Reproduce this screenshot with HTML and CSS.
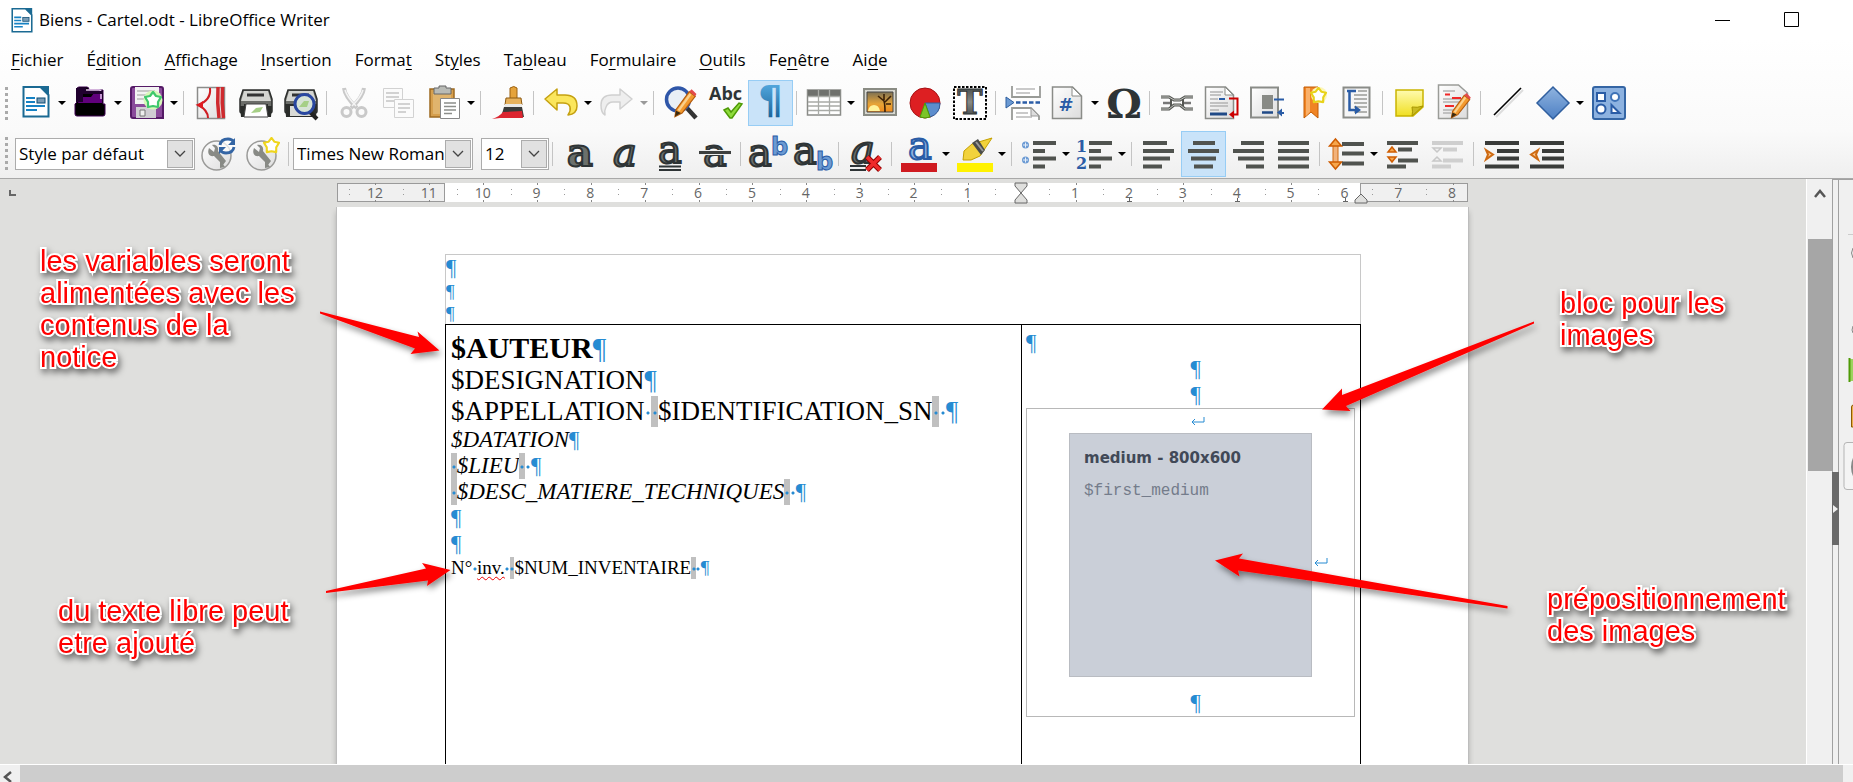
FILE: index.html
```html
<!DOCTYPE html>
<html lang="fr">
<head>
    <meta charset="UTF-8">
    <title>Biens - Cartel.odt - LibreOffice Writer</title>
    <link rel="stylesheet" href="styles.css">
</head>
<body>
    <!-- shared gradients and symbols -->
    <svg class="defs" aria-hidden="true">
        <defs>
            <linearGradient id="gDark" x1="0" y1="0" x2="0" y2="1"><stop offset="0" stop-color="#2e3436"/><stop offset=".5" stop-color="#888a85"/><stop offset="1" stop-color="#2e3436"/></linearGradient>
            <linearGradient id="gBlue" x1="0" y1="0" x2="0" y2="1"><stop offset="0" stop-color="#8fb3df"/><stop offset="1" stop-color="#4d80c4"/></linearGradient>
            <linearGradient id="gPil" x1="0" y1="0" x2="0" y2="1"><stop offset="0" stop-color="#5db4ea"/><stop offset="1" stop-color="#12598f"/></linearGradient>
            <linearGradient id="gPaper" x1="0" y1="0" x2="1" y2="1"><stop offset="0" stop-color="#fff"/><stop offset="1" stop-color="#dcdcdc"/></linearGradient>
            <linearGradient id="gNote" x1="0" y1="0" x2="0" y2="1"><stop offset="0" stop-color="#fffbb0"/><stop offset="1" stop-color="#f0df22"/></linearGradient>
            <linearGradient id="gSun" x1="0" y1="0" x2="0" y2="1"><stop offset="0" stop-color="#7d7153"/><stop offset=".6" stop-color="#e7a437"/><stop offset="1" stop-color="#f08a1c"/></linearGradient>
            <filter id="drop" x="-20%" y="-50%" width="140%" height="220%"><feDropShadow dx="2" dy="4" stdDeviation="3" flood-color="#000" flood-opacity=".45"/></filter>
        </defs>
        <symbol id="doc" viewBox="0 0 28 32">
            <path d="M1.500 1h17l8 8v21.500h-25z" fill="#fff" stroke="#1b6a93" stroke-width="2"/>
            <path d="M18 0l9 9V0z" fill="#1b6a93"/>
            <path d="M4 12h9M4 16h9M4 20h19M4 24h11" stroke="#1682c4" stroke-width="2"/>
            <rect x="15" y="12" width="8" height="5" fill="#7a9cb5" stroke="#0d4d75"/>
        </symbol>
        <symbol id="wrench" viewBox="0 0 34 34">
            <circle cx="15.500" cy="18.500" r="14.500" fill="url(#gPaper)" stroke="#9a9a98" stroke-width="1.500"/>
            <path d="M8 11l5 4 1-4-3-3c4-1 7 2 6 6l8 10-3 4-9-9c-5 1-7-3-5-8z" fill="#888a85"/>
            <path d="M19 23l5 7-5 1z" fill="#888a85"/>
        </symbol>
        <symbol id="pencil" viewBox="0 0 20 26">
            <path d="M2 24l1-6L14 3l5 4L8 21z" fill="#f39a2e" stroke="#b55c0c"/>
            <path d="M14 3l2-2 4 4-1 2z" fill="#e34a4a"/>
            <path d="M2 24l1-5 4 2z" fill="#3a2a10"/>
            <path d="M5 19L15 5" stroke="#fbd08c" stroke-width="2"/>
        </symbol>
        <symbol id="star" viewBox="0 0 18 18">
            <path d="M9 1l3 4 5 1-3 5 0 5-5-1-5 1 0-5-3-5 5-1z" fill="#fff" stroke="currentColor" stroke-width="2.200" stroke-linejoin="round"/>
        </symbol>
    </svg>

    <header class="head">
        <div class="titlebar">
            <svg class="app-icon" viewBox="0 0 28 32"><use href="#doc"/></svg>
            <h1 class="title">Biens - Cartel.odt - LibreOffice Writer</h1>
            <button class="win" aria-label="Réduire"><svg width="16" height="16"><path d="M0 8.500h15" stroke="#000"/></svg></button>
            <button class="win" aria-label="Agrandir"><svg width="16" height="16"><path d="M.5.500h14v14H.5z" fill="none" stroke="#000"/></svg></button>
        </div>

        <nav class="menu">
            <button><u>F</u>ichier</button>
            <button>É<u>d</u>ition</button>
            <button><u>A</u>ffichage</button>
            <button><u>I</u>nsertion</button>
            <button>Forma<u>t</u></button>
            <button>St<u>y</u>les</button>
            <button>Ta<u>b</u>leau</button>
            <button>Fo<u>r</u>mulaire</button>
            <button><u>O</u>utils</button>
            <button>Fe<u>n</u>être</button>
            <button>Ai<u>d</u>e</button>
        </nav>

        <!-- standard toolbar -->
        <div class="bar bar-std">
            <i class="grip"></i>
            <button class="tb" aria-label="Nouveau"><svg viewBox="0 0 34 34"><use href="#doc" x="4" y="0" width="28" height="32"/></svg></button>
            <button class="dd" aria-label="Plus"></button>
            <button class="tb" aria-label="Ouvrir"><svg viewBox="0 0 34 34"><path d="M2 2q0-2 2-2h8q2 0 2 3h14v14h2v10q0 2-2 2H2q-2 0-2-2V17l2-2z" fill="#000" stroke="#3d0050" transform="translate(1 1)"/><path d="M4 17l2-4q1-2 3-2h8l3-4h8v10z" fill="#60007c"/><path d="M8 12V6q0-2 2-2h15q2 0 2 2v7" fill="none" stroke="#e6c6ee" stroke-width="1.500"/><path d="M2 2h10v3h16v3H9v8H2z" fill="#20002e"/></svg></button>
            <button class="dd" aria-label="Plus"></button>
            <button class="tb" aria-label="Enregistrer"><svg viewBox="0 0 34 34"><path d="M1 3q0-2 2-2h28q2 0 2 2v29H3q-2 0-2-2z" fill="#8a4a9b" stroke="#551a66" stroke-width="2"/><path d="M5 1h24v17H5z" fill="#f3f3f3"/><path d="M7 5h18M7 9h9M7 13h9" stroke="#bbb" stroke-width="1.500"/><path d="M6 21h20v11H6z" fill="#d0cdd3"/><path d="M10 24h5v6h-5z" fill="#eee" stroke="#777"/><circle cx="23" cy="14" r="9.500" fill="#d9f7bb"/><use href="#star" x="14" y="5" width="18" height="18" color="#3fc86c"/></svg></button>
            <button class="dd" aria-label="Plus"></button>
            <i class="sep"></i>
            <button class="tb" aria-label="Exporter au format PDF"><svg viewBox="0 0 34 34"><path d="M3.500 1.500h27v31h-27z" fill="url(#gPaper)" stroke="#8c8c8a" stroke-width="1.500"/><path d="M24 1q-1 16 1 31M28.500 1q-1 16 1 31" stroke="#cf2a2e" stroke-width="3.500" fill="none"/><path d="M16 2c1 8-4 14-12 17 6 3 10 7 10 13" fill="none" stroke="#cf1d22" stroke-width="2"/><path d="M3 19l6-4v8z" fill="#e01b20"/></svg></button>
            <button class="tb" aria-label="Imprimer"><svg viewBox="0 0 34 34"><path d="M4 4h26l3 9v12q0 2-2 2H3q-2 0-2-2V13z" fill="#6b6d69" stroke="#2c2e2c" stroke-width="1.500"/><path d="M5 5h24l3 10H2z" fill="#d4d5d1"/><path d="M8 9h17" stroke="#333" stroke-width="3"/><path d="M5 18h24v9H5z" fill="#2b2d2b"/><path d="M1 20h6l-2 11H2zM27 20h6l-1 11h-3z" fill="#2b2d2b"/><path d="M7 18h20l2 13H5z" fill="#fff" stroke="#444"/><path d="M12 27l5-5 7-1-3 5z" fill="#a6cf86"/></svg></button>
            <button class="tb" aria-label="Aperçu"><svg viewBox="0 0 34 34"><path d="M4 4h26l3 9v12q0 2-2 2H3q-2 0-2-2V13z" fill="#6b6d69" stroke="#2c2e2c" stroke-width="1.500"/><path d="M5 5h24l3 10H2z" fill="#d4d5d1"/><path d="M8 9h17" stroke="#333" stroke-width="3"/><path d="M1 18h32l-1 13H2z" fill="#2b2d2b"/><path d="M6 20h22v10H6z" fill="#d9dad6"/><path d="M26 26l7 7" stroke="#222" stroke-width="4"/><circle cx="20.500" cy="18" r="9.500" fill="#d6e2d5" stroke="#2947a0" stroke-width="3"/><path d="M15 21l5-6 5 0-2 6z" fill="#a6cf86"/></svg></button>
            <i class="sep"></i>
            <button class="tb" aria-label="Couper"><svg viewBox="0 0 34 34" fill="none" stroke="#c9c9c9"><path d="M7 2q1 9 13 20M27 2q-1 9-13 20" stroke-width="4"/><path d="M8 4q2 7 11 16M26 4q-2 7-11 16" stroke="#f4f4f4" stroke-width="1.500"/><circle cx="9.500" cy="26" r="4.500" stroke-width="3"/><circle cx="24.500" cy="26" r="4.500" stroke-width="3"/></svg></button>
            <button class="tb" aria-label="Copier"><svg viewBox="0 0 34 34" fill="#fbfbfb" stroke="#d2d2d2"><path d="M1.500 2.500h19v19h-19z"/><path d="M4 7h13M4 11h13M4 15h9" stroke-width="2"/><path d="M12.500 13.500h19v18h-19z"/><path d="M16 18h12M16 22h12M16 26h8" stroke-width="2"/></svg></button>
            <button class="tb" aria-label="Coller"><svg viewBox="0 0 34 34"><path d="M3 3h24v28H3z" fill="#d69f4d" stroke="#9d6a20" stroke-width="1.500"/><path d="M6 6h18v22H6z" fill="#e0b46d"/><path d="M7 2h5V0h7v2h5v6H7z" fill="#b9bbb6" stroke="#666"/><path d="M13.500 12.500h19v20h-19z" fill="#fff" stroke="#888"/><path d="M17 17h12M17 20.500h12M17 24h12M17 27.500h8" stroke="#8c8e8a" stroke-width="1.500"/></svg></button>
            <button class="dd" aria-label="Plus"></button>
            <i class="sep"></i>
            <button class="tb" aria-label="Cloner le formatage"><svg viewBox="0 0 34 34"><path d="M19 2q4-3 7 0v12h-7z" fill="#e5a33b" stroke="#9b6110"/><path d="M15 12h15l1 7H14z" fill="#e7b25d" stroke="#8d5a12"/><path d="M14 18h17v4H13z" fill="#e9e9e7"/><path d="M13 21h18l2 10H10z" fill="#3a3b3a"/><path d="M12 26l19-1 1 7H9l-8 1q7-2 11-7z" fill="#dc2530"/></svg></button>
            <i class="sep"></i>
            <button class="tb" aria-label="Annuler"><svg viewBox="0 0 34 34"><path d="M1 13L13 3v6h8q12 0 12 11 0 8-9 9 3-4 2-8-1-4-7-4h-6v7z" fill="#fbe65c" stroke="#c5a111" stroke-width="1.500" stroke-linejoin="round"/></svg></button>
            <button class="dd" aria-label="Plus"></button>
            <button class="tb" aria-label="Rétablir"><svg viewBox="0 0 34 34"><path d="M32 13L20 3v6h-8Q1 9 1 19q0 8 4 10-1-4 1-8 2-5 7-5h7v7z" fill="#eee" stroke="#d0d0d0" stroke-width="1.500" stroke-linejoin="round"/></svg></button>
            <button class="dd off" aria-label="Plus"></button>
            <i class="sep"></i>
            <button class="tb" aria-label="Rechercher"><svg viewBox="0 0 34 34"><path d="M22 21l10 11" stroke="#333" stroke-width="4.500"/><circle cx="14" cy="13.500" r="11.500" fill="#e9eff6" stroke="#2f56a8" stroke-width="3.500"/><use href="#pencil" x="7" y="2" width="27" height="31"/></svg></button>
            <button class="tb" aria-label="Orthographe"><svg viewBox="0 0 34 34"><text x="0" y="14" class="t-abc">Abc</text><path d="M15 24l4-2 3 4 8-9 3 1-10 14h-2z" fill="#8edb3c" stroke="#4e9a06" stroke-width="1.500"/></svg></button>
            <button class="tb on" aria-label="Marques de formatage"><svg viewBox="0 0 34 34"><text x="4" y="28" class="t-pil" fill="url(#gPil)">¶</text></svg></button>
            <i class="sep"></i>
            <button class="tb" aria-label="Tableau"><svg viewBox="0 0 34 34"><path d="M.5 4h33v25H.5z" fill="#fff" stroke="#8a8c88" stroke-width="1.500"/><path d="M1 4h32v6H1z" fill="#6f716d"/><path d="M11.500 4v25M22.500 4v25M1 10.500h32M1 16h32M1 20h32M1 24.500h32" stroke="#a9aba7" stroke-width="1.300"/></svg></button>
            <button class="dd" aria-label="Plus"></button>
            <button class="tb" aria-label="Image"><svg viewBox="0 0 34 34"><path d="M0 2h34v28H0z" fill="#8a8c84"/><path d="M2 4h30v24H2z" fill="#d8d8d0"/><path d="M4 6h26v20H4z" fill="url(#gSun)" stroke="#444"/><path d="M5 25q1-6 6-6t6 6z" fill="#fff29a"/><path d="M22 26q0-8-1-11l-6-5M22 16l6-6M21 14V8M23 18h5" stroke="#3b2108" stroke-width="1.600" fill="none"/></svg></button>
            <button class="tb" aria-label="Diagramme"><svg viewBox="0 0 34 34"><circle cx="17" cy="17" r="15" fill="#dd1f22" stroke="#a61114"/><path d="M17 17h15q0 11-10 14z" fill="#5c8dcd" stroke="#2f5f9f"/><path d="M17 17l5 14q-5 2-10 0z" fill="#7cc427" stroke="#4e9a06"/></svg></button>
            <button class="tb" aria-label="Zone de texte"><svg viewBox="0 0 34 34"><path d="M1 1h32v32H1z" fill="#fff" stroke="#000" stroke-width="2" stroke-dasharray="2.500 1.500"/><text x="17" y="28" text-anchor="middle" class="t-t" fill="url(#gDark)">T</text></svg></button>
            <i class="sep"></i>
            <button class="tb" aria-label="Saut de page"><svg viewBox="0 0 34 34"><path d="M6 0v11h28V0M6 34V22h19l8 8v4" fill="#fff" stroke="#999b97" stroke-width="1.800"/><path d="M10 3h19M10 7h14M10 27h12M10 31h16" stroke="#b9b9b9" stroke-width="1.500"/><path d="M25 22v8h8z" fill="#ddd" stroke="#999"/><path d="M0 11l8 5.500L0 22z" fill="#6b9ad3" stroke="#2f5f9f"/><path d="M10 16.500h24" stroke="#2a5ca6" stroke-width="2.500" stroke-dasharray="4.500 2"/></svg></button>
            <button class="tb" aria-label="Champ"><svg viewBox="0 0 34 34"><path d="M1.500 1h20l9 9v22.500h-29z" fill="url(#gPaper)" stroke="#8a8c88" stroke-width="1.500"/><path d="M21 1v9h9z" fill="#fff" stroke="#8a8c88"/><text x="15" y="25" text-anchor="middle" class="t-hash">#</text></svg></button>
            <button class="dd" aria-label="Plus"></button>
            <button class="tb" aria-label="Caractère spécial"><svg viewBox="0 0 34 34"><text x="17" y="32" text-anchor="middle" class="t-omega">Ω</text></svg></button>
            <i class="sep"></i>
            <button class="tb" aria-label="Hyperlien"><svg viewBox="0 0 34 34" fill="none"><path d="M1 11h8l5 3h6l5-3h8M1 23h8l5-4h6l5 4h8" stroke="#555753" stroke-width="3"/><path d="M1 11h8l5 3h6l5-3h8M1 23h8l5-4h6l5 4h8" stroke="#c4c6c2" stroke-width="1"/><path d="M3 17h7M24 17h7" stroke="#777" stroke-width="2.500"/><path d="M11 13v7M23 13v7" stroke="#555753" stroke-width="2"/></svg></button>
            <button class="tb" aria-label="Note de bas de page"><svg viewBox="0 0 34 34"><path d="M.5 1h20l8 8v23.500H.5z" fill="url(#gPaper)" stroke="#8a8c88" stroke-width="1.500"/><path d="M20 1v8h8z" fill="#fff" stroke="#8a8c88"/><path d="M5 6h13M5 9h11M5 13h8M5 17h18M5 20h18M5 24h9" stroke="#b3b3b3" stroke-width="1.500"/><path d="M14 13h6" stroke="#2a5ca6" stroke-width="2"/><path d="M5 28h17" stroke="#204a87" stroke-width="3"/><path d="M24 12.500h8.500v16H26" fill="none" stroke="#cc0000" stroke-width="2"/><path d="M24 28.500l5-4v8z" fill="#cc0000"/></svg></button>
            <button class="tb" aria-label="Note de fin"><svg viewBox="0 0 34 34"><path d="M1 1.500h27v30H1z" fill="url(#gPaper)" stroke="#8a8c88" stroke-width="2"/><path d="M12 9h11v14H12z" fill="#888a85"/><path d="M12 26.500h11" stroke="#204a87" stroke-width="2.500"/><path d="M24 13.500h10M30 27h4" stroke="#2a5ca6" stroke-width="2"/><path d="M27 26.500l5-4v8z" fill="#2a5ca6"/></svg></button>
            <button class="tb" aria-label="Repère de texte"><svg viewBox="0 0 34 34"><path d="M9 1h14v31l-7-6-7 6z" fill="#f08424" stroke="#c45c04"/><path d="M11 2h4v24l-4 4z" fill="#f9b06a"/><circle cx="24" cy="9" r="8" fill="#fcf6b8"/><use href="#star" x="15" y="1" width="17" height="17" color="#e8d21a"/></svg></button>
            <button class="tb" aria-label="Renvoi"><svg viewBox="0 0 34 34"><path d="M3.500 1.500h26v30h-26z" fill="#f6f6f6" stroke="#8a8c88" stroke-width="2"/><path d="M18 5h9M14 9h13M14 13h13M14 17h13M14 21h13M14 26h13" stroke="#9a9c98" stroke-width="1.500"/><path d="M7 5h9M9.500 5v19H15" fill="none" stroke="#2a5ca6" stroke-width="2.500"/><path d="M15 19.500l6 4.500-6 4.500z" fill="#2a5ca6"/></svg></button>
            <i class="sep"></i>
            <button class="tb" aria-label="Commentaire"><svg viewBox="0 0 34 34"><path d="M3 4h27v17l-10 9H3z" fill="url(#gNote)" stroke="#c9b400" stroke-width="1.500"/><path d="M19 30q1-4 0-9 5 1 11-1z" fill="#c9bb22" stroke="#a89600"/></svg></button>
            <button class="tb" aria-label="Suivi des modifications"><svg viewBox="0 0 34 34"><path d="M.5-1h20l9 8v25.500H.5z" fill="url(#gPaper)" stroke="#9a9c98" stroke-width="1.500"/><path d="M5 5h12M5 13h20M5 16h18M5 24h12M5 27h8" stroke="#b3b3b3" stroke-width="1.500"/><path d="M7 8.500h5M14 12h9M7 20h9" stroke="#ef2929" stroke-width="2.200"/><use href="#pencil" x="9" y="6" width="26" height="28"/></svg></button>
            <i class="sep"></i>
            <button class="tb" aria-label="Ligne"><svg viewBox="0 0 34 34"><path d="M5 31L32 4" stroke="#ddd" stroke-width="2"/><path d="M3 29L30 2" stroke="#000" stroke-width="1.600"/></svg></button>
            <button class="tb" aria-label="Losange"><svg viewBox="0 0 34 34"><path d="M17 1l16 16-16 16L1 17z" fill="url(#gBlue)" stroke="#305f9f" stroke-width="1.500"/></svg></button>
            <button class="dd" aria-label="Plus"></button>
            <button class="tb" aria-label="Fonctions de dessin"><svg viewBox="0 0 34 34"><rect x="1" y="1" width="32" height="32" rx="2" fill="#8db2e0" stroke="#3465a4" stroke-width="2"/><path d="M5 7h8v8H5z" fill="#fff" stroke="#2a5ca6" stroke-width="2"/><circle cx="23" cy="11" r="4" fill="#fff" stroke="#3f73b7" stroke-width="2"/><circle cx="9" cy="23" r="4.500" fill="#fff" stroke="#2a5ca6" stroke-width="2"/><path d="M19.500 19v8h8z" fill="#fff" stroke="#2a5ca6" stroke-width="2"/></svg></button>
        </div>

        <!-- formatting toolbar -->
        <div class="bar bar-fmt">
            <i class="grip"></i>
            <label class="combo">
                <select aria-label="Style de paragraphe"><option>Style par défaut</option></select>
                <span class="chev"><svg width="12" height="8"><path d="M1 1l5 5 5-5" fill="none" stroke="#444" stroke-width="1.300"/></svg></span>
            </label>
            <button class="tb" aria-label="Actualiser le style"><svg viewBox="0 0 34 34"><use href="#wrench" width="34" height="34"/><circle cx="26" cy="9" r="8" fill="#fff" opacity=".7"/><path d="M19 8q1-6 8-6 4 0 6 3M33 10q-1 6-8 6-4 0-6-3" fill="none" stroke="#3465a4" stroke-width="2.800"/><path d="M34 1v7h-7zM18 17v-7h7z" fill="#3465a4"/></svg></button>
            <button class="tb" aria-label="Nouveau style"><svg viewBox="0 0 34 34"><use href="#wrench" width="34" height="34"/><use href="#star" x="17" y="0" width="17" height="17" color="#efd51c"/></svg></button>
            <i class="sep"></i>
            <label class="combo">
                <select aria-label="Nom de police"><option>Times New Roman</option></select>
                <span class="chev"><svg width="12" height="8"><path d="M1 1l5 5 5-5" fill="none" stroke="#444" stroke-width="1.300"/></svg></span>
            </label>
            <label class="combo size">
                <select aria-label="Taille de police"><option>12</option></select>
                <span class="chev"><svg width="12" height="8"><path d="M1 1l5 5 5-5" fill="none" stroke="#444" stroke-width="1.300"/></svg></span>
            </label>
            <i class="sep"></i>
            <button class="tb" aria-label="Gras"><svg viewBox="0 0 34 34"><text x="17" y="29" text-anchor="middle" class="t-a wide">a</text></svg></button>
            <button class="tb" aria-label="Italique"><svg viewBox="0 0 34 34"><text x="17" y="29" text-anchor="middle" class="t-a it">a</text></svg></button>
            <button class="tb" aria-label="Souligné"><svg viewBox="0 0 34 34"><text x="17" y="26" text-anchor="middle" class="t-a">a</text><path d="M6 29.500h22M6 33h22" stroke="#2e3436" stroke-width="2"/></svg></button>
            <button class="tb" aria-label="Barré"><svg viewBox="0 0 34 34"><text x="17" y="29" text-anchor="middle" class="t-a">a</text><path d="M1 15.500h32" stroke="#eee" stroke-width="5"/><path d="M1 15.500h32" stroke="#3c3f3e" stroke-width="3"/></svg></button>
            <i class="sep"></i>
            <button class="tb" aria-label="Exposant"><svg viewBox="0 0 34 34"><text x="-3" y="29" class="t-a">a</text><text x="20" y="18" class="t-b">b</text></svg></button>
            <button class="tb" aria-label="Indice"><svg viewBox="0 0 34 34"><text x="-3" y="27" class="t-a">a</text><text x="20" y="33" class="t-b">b</text></svg></button>
            <i class="sep"></i>
            <button class="tb" aria-label="Effacer le formatage"><svg viewBox="0 0 34 34"><text x="14" y="26" text-anchor="middle" class="t-a it">a</text><path d="M1 29h16M1 33h16" stroke="#2e3436" stroke-width="2"/><path d="M18 20l13 13M31 20L18 33" stroke="#8f0000" stroke-width="5.500"/><path d="M18 20l13 13M31 20L18 33" stroke="#ef2929" stroke-width="3.500"/></svg></button>
            <i class="sep"></i>
            <button class="tb" aria-label="Couleur de police"><svg viewBox="0 0 34 34"><text x="18" y="22" text-anchor="middle" class="t-a blue">a</text><path d="M-1 26h36v9H-1z" fill="#cf1a20"/></svg></button>
            <button class="dd" aria-label="Plus"></button>
            <button class="tb" aria-label="Surlignage"><svg viewBox="0 0 34 34"><path d="M5 23l1-9 8-7L34 1 22 19l-9 4z" fill="#f2d23c" stroke="#c4a000"/><path d="M14 6l9 12 4-5-7-11z" fill="#4a4c4a"/><path d="M18 5l7 9" stroke="#999" stroke-width="2"/><path d="M-1 26h36v9H-1z" fill="#fff200"/></svg></button>
            <button class="dd" aria-label="Plus"></button>
            <i class="sep"></i>
            <button class="tb" aria-label="Puces"><svg viewBox="0 0 34 34"><circle cx="3.500" cy="8" r="3.500" fill="#6b9ad3"/><circle cx="3.500" cy="23" r="3.500" fill="#6b9ad3"/><path d="M1 8h5M3.500 5.500v5M1 23h5M3.500 20.500v5" stroke="#e6effa"/><path d="M11 6h23M11 14h12M11 21.500h23M11 29.500h12" class="ln"/></svg></button>
            <button class="dd" aria-label="Plus"></button>
            <button class="tb" aria-label="Numérotation"><svg viewBox="0 0 34 34"><text x="-2" y="15" class="t-num">1</text><text x="-2" y="32" class="t-num">2</text><path d="M11 6h23M11 14h12M11 21.500h23M11 29.500h12" class="ln"/></svg></button>
            <button class="dd" aria-label="Plus"></button>
            <i class="sep"></i>
            <button class="tb" aria-label="Aligner à gauche"><svg viewBox="0 0 34 34"><path d="M1 6h24M1 14h31M1 21.500h27M1 29.500h19" class="ln"/></svg></button>
            <button class="tb on" aria-label="Centrer"><svg viewBox="0 0 34 34"><path d="M6 6h22M1 14h31M4 21.500h25M7 29.500h19" class="ln"/></svg></button>
            <button class="tb" aria-label="Aligner à droite"><svg viewBox="0 0 34 34"><path d="M9 6h23M1 14h31M6 21.500h26M14 29.500h18" class="ln"/></svg></button>
            <button class="tb" aria-label="Justifier"><svg viewBox="0 0 34 34"><path d="M1 6h31M1 14h31M1 21.500h31M1 29.500h31" class="ln"/></svg></button>
            <i class="sep"></i>
            <button class="tb" aria-label="Interligne"><svg viewBox="0 0 34 34"><path d="M3 7h5v21H3z" fill="#f2b27a" stroke="#ce6a12"/><path d="M5.500 2l6 7h-12zM5.500 32l6-7h-12z" fill="#f6a64c" stroke="#ce5c00" stroke-width="1.500"/><path d="M12 7h22M12 16.500h22M12 26.500h22" class="ln"/></svg></button>
            <button class="dd" aria-label="Plus"></button>
            <button class="tb" aria-label="Augmenter l'espacement"><svg viewBox="0 0 34 34"><path d="M1 6h31M12 12.500h14M12 23.500h20M1 29.500h19" class="ln"/><path d="M6 10l4 5H2zM6 25l4-5H2z" fill="#f6a64c" stroke="#ce5c00" stroke-width="1.500"/></svg></button>
            <button class="tb" aria-label="Diminuer l'espacement"><svg viewBox="0 0 34 34"><path d="M1 6h31M12 12.500h14M12 23.500h20M1 29.500h19" class="ln off"/><path d="M6 15l4-4H2zM6 20l4 4H2z" fill="#f0f0f0" stroke="#c8c8c8" stroke-width="1.500"/></svg></button>
            <i class="sep"></i>
            <button class="tb" aria-label="Augmenter le retrait"><svg viewBox="0 0 34 34"><path d="M1 6h34M13 14h22M13 21.500h22M1 29.500h34" class="ln sq"/><path d="M2 13l7 4.500-7 5 2-5z" fill="#fcc58a" stroke="#ce6a12" stroke-width="2"/></svg></button>
            <button class="tb" aria-label="Diminuer le retrait"><svg viewBox="0 0 34 34"><path d="M1 6h34M13 14h22M13 21.500h22M1 29.500h34" class="ln sq"/><path d="M9 13l-7 4.500 7 5-2-5z" fill="#fcc58a" stroke="#ce6a12" stroke-width="2"/></svg></button>
        </div>
    </header>

    <main class="work">
        <div class="canvas">
            <svg class="corner" width="8" height="8"><path d="M1 0v5h6" fill="none" stroke="#666" stroke-width="2"/></svg>

            <div class="sheet">
                <div class="ruler">
                    <div class="out"></div>
                    <div class="in"></div>
                    <div class="out"></div>
                    <ol class="ticks">
                        <li>12</li><li>11</li><li>10</li><li>9</li><li>8</li><li>7</li><li>6</li>
                        <li>5</li><li>4</li><li>3</li><li>2</li><li>1</li><li class="zero"></li>
                        <li>1</li><li class="tab">2</li><li>3</li><li class="tab">4</li><li>5</li>
                        <li class="tab">6</li><li>7</li><li>8</li>
                    </ol>
                    <svg class="mk mk-l" width="14" height="22"><path d="M1 1h12v3L7 11 1 4zM1 21h12v-3L7 11l-6 7z" fill="#dfdfdd" stroke="#666"/></svg>
                    <svg class="mk mk-r" width="14" height="22"><path d="M1 21h12v-3L7 12l-6 6z" fill="#dfdfdd" stroke="#666"/></svg>
                </div>

                <div class="page">
                    <div class="top">
                        <p class="p23"><b class="pm">¶</b></p>
                        <p class="p19"><b class="pm">¶</b></p>
                        <p class="p19"><b class="pm">¶</b></p>
                    </div>
                    <div class="cells">
                        <div class="cell text">
                            <p class="p30">$AUTEUR<b class="pm">¶</b></p>
                            <p class="p27">$DESIGNATION<b class="pm">¶</b></p>
                            <p class="p27">$APPELLATION<b class="sp"> </b><b class="sp f"> </b>$IDENTIFICATION_SN<b class="sp f"> </b><b class="sp"> </b><b class="pm">¶</b></p>
                            <p class="p23"><em>$DATATION</em><b class="pm">¶</b></p>
                            <p class="p23"><b class="sp f"> </b><em>$LIEU</em><b class="sp f"> </b><b class="sp"> </b><b class="pm">¶</b></p>
                            <p class="p23"><b class="sp f"> </b><em>$DESC_MATIERE_TECHNIQUES</em><b class="sp f"> </b><b class="sp"> </b><b class="pm">¶</b></p>
                            <p class="p23"><b class="pm">¶</b></p>
                            <p class="p23"><b class="pm">¶</b></p>
                            <p class="p19">N°<b class="sp"> </b><span class="typo">inv.</span><b class="sp"> </b><b class="sp f"> </b>$NUM_INVENTAIRE<b class="sp f"> </b><b class="sp"> </b><b class="pm">¶</b></p>
                        </div>
                        <div class="cell media">
                            <p class="p23"><b class="pm">¶</b></p>
                            <p class="p23 mid"><b class="pm">¶</b></p>
                            <p class="p23 mid"><b class="pm">¶</b></p>
                            <div class="frame">
                                <p class="p23 mid"><svg width="14" height="10"><path d="M1 6h12V1M4 3L1 6l3 3" fill="none" stroke="#268bd2"/></svg></p>
                                <div class="pic-row">
                                    <div class="pic">
                                        <strong>medium - 800x600</strong>
                                        <code>$first_medium</code>
                                    </div>
                                    <svg class="br" width="14" height="10"><path d="M1 6h12V1M4 3L1 6l3 3" fill="none" stroke="#268bd2"/></svg>
                                </div>
                                <p class="p23 mid last"><b class="pm">¶</b></p>
                            </div>
                        </div>
                    </div>
                </div>

                <!-- callouts drawn over the document -->
                <svg class="arrows" width="1131" height="585" viewBox="337 179 1131 585">
                    <g fill="#f00" filter="url(#drop)">
                        <path d="M320 311.500l99 25.500-1.500-5.500L439.500 350.500 410.500 354l4.500-5.500-95-35z"/>
                        <path d="M326 591l100-22.500-4-5.500 28.500 7-23.500 16 1-5.500L326 593z"/>
                        <path d="M1534 321.500L1342 395v-6.500l-20 21 28.500 1.500-4.500-5 188-82.500z"/>
                        <path d="M1507.500 606L1239 558.500l4-5-28 7 24.500 16-1.500-6 269.500 38z"/>
                    </g>
                </svg>
                <p class="note n-vars">les variables seront<br>alimentées avec les<br>contenus de la<br>notice</p>
                <p class="note n-text">du texte libre peut<br>etre ajouté</p>
                <p class="note n-bloc">bloc pour les<br>images</p>
                <p class="note n-pos">prépositionnement<br>des images</p>
            </div>
        </div>

        <div class="vscroll">
            <button aria-label="Haut"><svg width="12" height="10"><path d="M1 9l5-6 5 6" fill="none" stroke="#555" stroke-width="2.500"/></svg></button>
            <div class="thumb"></div>
        </div>
        <div class="split">
            <button aria-label="Volet latéral"><svg width="7" height="8"><path d="M1 0l5 4-5 4z" fill="#f0f0f0"/></svg></button>
        </div>
        <aside class="side">
            <svg width="13" height="320">
                <path d="M8 54.500h5" stroke="#ccc"/>
                <path d="M13 68q-3 5 0 10M13 146l-1 4 1 3" fill="none" stroke="#888"/>
                <path d="M9 179h4v22H9z" fill="#9bd35e"/><path d="M9.500 178v24" stroke="#4e9a06" stroke-width="2"/>
                <path d="M11.500 227q0-2 2-2v22h-2z" fill="#e9b04a" stroke="#8f5902"/>
                <path d="M14 262.500H7q-3 0-3 3v41q0 3 3 3h7" fill="#f4f4f4" stroke="#b4b4b4"/>
                <path d="M14 278q-4 9 0 18" fill="none" stroke="#888" stroke-width="2"/>
            </svg>
        </aside>
    </main>

    <div class="hscroll">
        <button aria-label="Gauche"><svg width="10" height="12"><path d="M9 1L3 6l6 5" fill="none" stroke="#555" stroke-width="2.500"/></svg></button>
        <div class="thumb"></div>
    </div>
</body>
</html>
```
FILE: styles.css
```css
* {
    box-sizing: border-box;
}
body {
    margin: 0;
    height: 100vh;
    display: flex;
    flex-direction: column;
    overflow: hidden;
    background: #f0f0f0;
    font-family: "Open Sans", "Noto Sans", sans-serif;
    font-size: 17px;
    color: #000;
}
p, h1, ol {
    margin: 0;
    padding: 0;
}
button {
    border: 0;
    padding: 0;
    background: none;
    font: inherit;
    color: inherit;
}
svg {
    display: block;
    flex: none;
}
.defs {
    position: absolute;
    width: 0;
    height: 0;
}

/* window head */
.head {
    flex: none;
    border-bottom: 1px solid #a8a8a8;
    background: linear-gradient(#fff 40px, #fafafa 130px, #efefef);
}
.titlebar {
    display: flex;
    align-items: center;
    height: 40px;
    padding-left: 11px;
}
.app-icon {
    width: 22px;
    height: 25px;
}
.title {
    flex: 1;
    margin-left: 6px;
    font-size: 17px;
    font-weight: 400;
    line-height: 40px;
}
.win {
    display: flex;
    align-items: center;
    justify-content: center;
    width: 69px;
    height: 40px;
}
.win:last-child {
    margin-right: 27px;
}

.menu {
    display: flex;
    gap: 23px;
    height: 40px;
    padding-left: 11px;
}
.menu button {
    line-height: 40px;
}
.menu u {
    text-underline-offset: 3px;
}

/* toolbars */
.bar {
    display: flex;
    align-items: center;
    height: 46px;
}
.bar-fmt {
    height: 48px;
    margin-top: 4px;
    padding-bottom: 1px;
}
.grip {
    flex: none;
    width: 3px;
    height: 33px;
    margin: 0 4px 0 5px;
    background: repeating-linear-gradient(#aaa 0 3px, transparent 3px 6px);
}
.bar-fmt .grip {
    margin-right: 7px;
}
.tb {
    flex: none;
    height: 46px;
    width: 45px;
    padding: 6px 5px 6px 6px;
}
.tb svg {
    width: 34px;
    height: 34px;
    overflow: visible;
}
.tb.on {
    background: #c9e3f9;
    box-shadow: inset 0 0 0 1px #97cdf5;
}
.dd {
    flex: none;
    width: 11px;
    height: 46px;
}
.dd::before {
    content: "";
    display: block;
    margin: 0 3px 0 1px;
    border: 4px solid transparent;
    border-top-color: #000;
    border-bottom: 0;
}
.dd.off::before {
    border-top-color: #999;
}
.sep {
    flex: none;
    width: 1px;
    height: 24px;
    margin: 0 4px 0 3px;
    background: #c4c4c4;
}
.combo {
    position: relative;
    flex: none;
    width: 180px;
    height: 32px;
}
.combo select {
    appearance: none;
    width: 100%;
    height: 100%;
    padding: 0 28px 0 3px;
    border: 1px solid #acacac;
    border-radius: 0;
    background: #fff;
    font: inherit;
    color: #000;
}
.size {
    width: 68px;
    margin-left: 8px;
}
/* drop arrow over the right end of the select */
.chev {
    position: absolute;
    top: 2px;
    right: 2px;
    display: flex;
    align-items: center;
    justify-content: center;
    width: 26px;
    height: 28px;
    border: 1px solid #acacac;
    background: #e1e1e1;
    pointer-events: none;
}

/* letters and lines inside the icons */
.t-abc {
    font: bold 18px "Open Sans", sans-serif;
    fill: #2e3436;
}
.t-pil {
    font: bold 39px "DejaVu Sans", sans-serif;
}
.t-t {
    font: bold 34px "DejaVu Serif", serif;
    stroke: #2e3436;
}
.t-a {
    font: 40px "DejaVu Serif", serif;
    fill: #6b706c;
    stroke: #2e3436;
    stroke-width: 2px;
}
.t-a.it {
    font-style: italic;
}
.t-a.wide {
    font-weight: bold;
}
.t-a.blue {
    fill: #8fb3df;
    stroke: #2a5ca6;
}
.t-b {
    font: bold 24px "DejaVu Sans", sans-serif;
    fill: #6b9ad3;
    stroke: #2a5ca6;
}
.t-hash {
    font: bold 18px "DejaVu Sans", sans-serif;
    fill: #2a5ca6;
}
.t-omega {
    font: bold 40px "DejaVu Serif", serif;
    fill: #2e3436;
}
.t-num {
    font: bold 16px "DejaVu Serif", serif;
    fill: #2a5ca6;
}
.ln {
    fill: none;
    stroke: #50534f;
    stroke-width: 4px;
}
.ln.off {
    stroke: #cfcfcf;
}
.ln.sq {
    stroke: #3a3c3a;
}

/* work area */
.work {
    flex: 1;
    min-height: 0;
    display: flex;
}
.canvas {
    position: relative;
    flex: 1;
    min-width: 0;
    display: flex;
    justify-content: center;
    padding-right: 1px;
    overflow: hidden;
    background: #dfdfdd;
}
.corner {
    position: absolute;
    left: 9px;
    top: 11px;
}
.sheet {
    position: relative;
    flex: none;
    display: flex;
    flex-direction: column;
    width: 1131px;
    padding-top: 4px;
}

/* ruler */
.ruler {
    position: relative;
    display: flex;
    height: 19px;
    margin-bottom: 5px;
}
.ruler .out {
    flex: none;
    width: 108px;
    border: 1px solid #9a9a9a;
    background: #f0f0f0;
}
.ruler .in {
    flex: 1;
    background: #fff;
}
.ticks {
    position: absolute;
    inset: 0;
    padding-left: 12px;
    margin-right: -12px;
    display: flex;
    clip-path: inset(0 12px 0 0);
    list-style: none;
    font-size: 14px;
    line-height: 19px;
    text-align: center;
    color: #666;
}
.ticks li {
    position: relative;
    flex: 1;
    padding-right: 2px;
    background:
        linear-gradient(#888, #888) center top / 1px 2px no-repeat,
        linear-gradient(#888, #888) center bottom / 1px 2px no-repeat,
        linear-gradient(#999, #999) 0 6px / 1px 1px no-repeat,
        linear-gradient(#999, #999) 0 11px / 1px 1px no-repeat;
}
.ticks .tab {
    background:
        linear-gradient(#666, #666) center bottom / 5px 1px no-repeat,
        linear-gradient(#666, #666) center bottom / 1px 4px no-repeat,
        linear-gradient(#999, #999) 0 6px / 1px 1px no-repeat,
        linear-gradient(#999, #999) 0 11px / 1px 1px no-repeat;
}
.mk {
    position: absolute;
    top: -1px;
}
.mk-l {
    left: 677px;
}
.mk-r {
    right: 100px;
}

/* page */
.page {
    flex: 1;
    display: flex;
    flex-direction: column;
    padding: 47px 107px 0 108px;
    background: #fff;
    box-shadow: 0 0 0 1px #bdbdbd, 0 5px 6px rgba(0, 0, 0, .3);
    clip-path: inset(0 -6px);
    font-family: "Liberation Serif", serif;
}
.top {
    height: 70px;
    overflow: hidden;
    border: 1px solid #c8c8c8;
    border-bottom: 0;
}
.cells {
    flex: 1;
    display: flex;
    border: 1px solid #000;
    border-bottom: 0;
}
.cell.text {
    flex: none;
    width: 575px;
    padding: 6px 0 0 5px;
}
.cell.media {
    flex: 1;
    padding: 5px 5px 0 4px;
    border-left: 1px solid #000;
}
.page p {
    white-space: pre;
}
.p19 {
    font-size: 19px;
    line-height: 22px;
}
.p23 {
    font-size: 23px;
    line-height: 26px;
    height: 26px;
}
.p27 {
    font-size: 27px;
    line-height: 31px;
}
.p30 {
    font-size: 30px;
    font-weight: bold;
    line-height: 34px;
}
.mid {
    display: flex;
    padding-left: 50%;
    align-items: center;
}
/* non printing marks */
.pm {
    font-weight: normal;
    color: #268bd2;
}
.sp {
    display: inline-block;
    font-weight: normal;
    background: radial-gradient(#268bd2 1px, transparent 2px) center 55% / 4px 4px no-repeat;
}
.sp.f {
    background-color: #c0c0c0;
}
.typo {
    text-decoration: underline wavy #e00 1px;
    text-underline-offset: 2px;
}
.frame {
    display: flex;
    flex-direction: column;
    height: 309px;
    overflow: hidden;
    border: 1px solid #b8b8b8;
}
.pic-row {
    display: flex;
    align-items: center;
    gap: 2px;
    padding-left: 42px;
}
.pic-row .br {
    margin-top: 14px;
}
.pic {
    display: flex;
    flex-direction: column;
    gap: 13px;
    width: 243px;
    height: 244px;
    padding: 14px;
    border: 1px solid #b9bcc2;
    background: #cacfd8;
}
.pic strong {
    font: bold 15px/20px "DejaVu Sans", sans-serif;
    color: #414957;
    white-space: nowrap;
}
.pic code {
    font: 16px/20px "Liberation Mono", monospace;
    color: #747c8b;
}
.last {
    margin-top: 13px;
}

/* callouts */
.arrows {
    position: absolute;
    left: 0;
    top: 0;
    overflow: visible;
    pointer-events: none;
}
.note {
    position: absolute;
    font: 29px/32px "Liberation Sans", sans-serif;
    white-space: nowrap;
    color: #f00;
    -webkit-text-stroke: 4px #fff;
    paint-order: stroke fill;
    filter: drop-shadow(2px 4px 3px rgba(0, 0, 0, .5));
}
.n-vars {
    left: -297px;
    top: 66px;
}
.n-text {
    left: -279px;
    top: 416px;
}
.n-bloc {
    left: 1223px;
    top: 108px;
}
.n-pos {
    left: 1210px;
    top: 404px;
}

/* scrollbars and sidebar */
.vscroll {
    flex: none;
    width: 26px;
    padding-left: 1px;
    border-left: 1px solid #fff;
    background: #f0f0f0;
}
.vscroll button {
    display: flex;
    align-items: center;
    justify-content: center;
    width: 24px;
    height: 28px;
}
.vscroll .thumb {
    width: 24px;
    height: 232px;
    margin-top: 32px;
    background: #a6a6a6;
}
.split {
    flex: none;
    display: flex;
    flex-direction: column;
    justify-content: center;
    width: 7px;
    border: solid #a0a0a0;
    border-width: 1px 1px 0;
    background: #f0f0f0;
}
.split button {
    display: flex;
    align-items: center;
    width: 7px;
    height: 73px;
    margin: 73px -1px 0;
    background: #696969;
}
.side {
    flex: none;
    width: 14px;
    padding-left: 1px;
    border-top: 1px solid #a0a0a0;
}
.hscroll {
    flex: none;
    display: flex;
    height: 18px;
    border-top: 1px solid #fff;
}
.hscroll button {
    flex: none;
    width: 20px;
    height: 24px;
    padding-left: 2px;
}
.hscroll .thumb {
    flex: 1;
    margin-right: 10px;
    background: #cdcdcd;
}
```
